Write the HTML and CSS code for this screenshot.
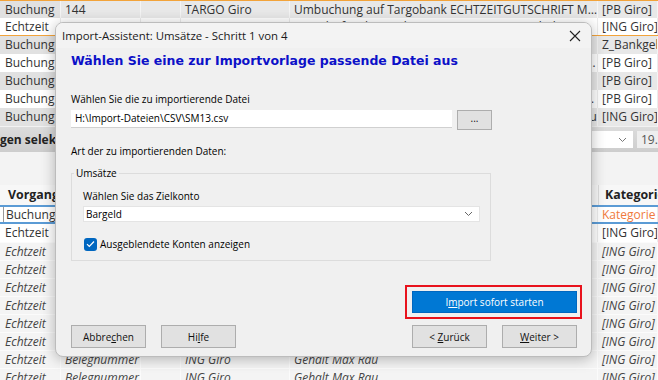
FILE: index.html
```html
<!DOCTYPE html>
<html lang="de">
<head>
    <meta charset="UTF-8">
    <meta name="viewport" content="width=device-width, initial-scale=1.0">
    <title>Import-Assistent</title>
<link rel="stylesheet" href="styles.css">
</head>
<body>
    <div class="app">
        <div class="rows top">
            <div class="row alt"><div class="c c1">Buchung</div><div class="c c2">144</div><div class="c c3"></div><div class="c c4">TARGO Giro</div><div class="c c5">Umbuchung auf Targobank ECHTZEITGUTSCHRIFT Max Rau</div><div class="c c6">[PB Giro]</div></div>
            <div class="row new"><div class="c c1">Echtzeit</div><div class="c c2"></div><div class="c c3"></div><div class="c c4"></div><div class="c c5">Gutschrift Echtzeitüberweisung Max Rau Gehalt Januar</div><div class="c c6">[ING Giro]</div></div>
            <div class="row alt"><div class="c c1">Buchung</div><div class="c c2"></div><div class="c c3"></div><div class="c c4"></div><div class="c c5">Kontoführung</div><div class="c c6">Z_Bankgebühren</div></div>
            <div class="row"><div class="c c1">Buchung</div><div class="c c2"></div><div class="c c3"></div><div class="c c4"></div><div class="c c5">Lastschrift Stadtwerke Abschlag Strom und Gas Februar</div><div class="c c6">[PB Giro]</div></div>
            <div class="row alt"><div class="c c1">Buchung</div><div class="c c2"></div><div class="c c3"></div><div class="c c4"></div><div class="c c5">Dauerauftrag Miete Wohnung Hauptstraße 12 Max Rau Februar</div><div class="c c6">[PB Giro]</div></div>
            <div class="row"><div class="c c1">Buchung</div><div class="c c2"></div><div class="c c3"></div><div class="c c4"></div><div class="c c5">Kartenzahlung Supermarkt Filiale 0815 Einkauf Lebensmittel</div><div class="c c6">[PB Giro]</div></div>
            <div class="row alt"><div class="c c1">Buchung</div><div class="c c2"></div><div class="c c3"></div><div class="c c4"></div><div class="c c5">Umbuchung auf ING Giro Tagesgeld Sparrate Max Rau</div><div class="c c6">[ING Giro]</div></div>
        </div>
        <div class="filter">
            <div class="filter-label">gen selektieren</div>
            <div class="combo"><svg width="9" height="6" viewBox="0 0 9 6"><path d="M1 1l3.5 3.5L8 1" fill="none" stroke="#777" stroke-width="1"/></svg></div>
            <div class="date">19.</div>
        </div>
        <div class="space"></div>
        <div class="row head"><div class="c c1">Vorgang</div><div class="c c2"></div><div class="c c3"></div><div class="c c4"></div><div class="c c5"></div><div class="c c6">Kategorie</div></div>
        <div class="rows bottom">
            <div class="row sel"><div class="c c1">Buchung</div><div class="c c2"></div><div class="c c3"></div><div class="c c4"></div><div class="c c5"></div><div class="c c6 orange">Kategorie</div></div>
            <div class="row"><div class="c c1">Echtzeit</div><div class="c c2"></div><div class="c c3"></div><div class="c c4"></div><div class="c c5"></div><div class="c c6">[ING Giro]</div></div>
            <div class="row it"><div class="c c1">Echtzeit</div><div class="c c2"></div><div class="c c3"></div><div class="c c4"></div><div class="c c5"></div><div class="c c6">[ING Giro]</div></div>
            <div class="row it"><div class="c c1">Echtzeit</div><div class="c c2"></div><div class="c c3"></div><div class="c c4"></div><div class="c c5"></div><div class="c c6">[ING Giro]</div></div>
            <div class="row it"><div class="c c1">Echtzeit</div><div class="c c2"></div><div class="c c3"></div><div class="c c4"></div><div class="c c5"></div><div class="c c6">[ING Giro]</div></div>
            <div class="row it"><div class="c c1">Echtzeit</div><div class="c c2"></div><div class="c c3"></div><div class="c c4"></div><div class="c c5"></div><div class="c c6">[ING Giro]</div></div>
            <div class="row it"><div class="c c1">Echtzeit</div><div class="c c2"></div><div class="c c3"></div><div class="c c4"></div><div class="c c5"></div><div class="c c6">[ING Giro]</div></div>
            <div class="row it"><div class="c c1">Echtzeit</div><div class="c c2"></div><div class="c c3"></div><div class="c c4"></div><div class="c c5"></div><div class="c c6">[ING Giro]</div></div>
            <div class="row it"><div class="c c1">Echtzeit</div><div class="c c2">Belegnummer</div><div class="c c3"></div><div class="c c4">ING Giro</div><div class="c c5">Gehalt Max Rau</div><div class="c c6">[ING Giro]</div></div>
            <div class="row it"><div class="c c1">Echtzeit</div><div class="c c2">Belegnummer</div><div class="c c3"></div><div class="c c4">ING Giro</div><div class="c c5">Gehalt Max Rau</div><div class="c c6">[ING Giro]</div></div>
        </div>
    </div>

    <div class="dialog">
        <div class="titlebar">
            <span>Import-Assistent: Umsätze - Schritt 1 von 4</span>
            <svg class="close" width="12" height="12" viewBox="0 0 12 12"><path d="M1 1l10 10M11 1L1 11" stroke="#222" stroke-width="1.1"/></svg>
        </div>
        <div class="dlg-body">
            <div class="heading">Wählen Sie eine zur Importvorlage passende Datei aus</div>
            <div class="label first">Wählen Sie die zu importierende Datei</div>
            <div class="file-row">
                <div class="input">H:\Import-Dateien\CSV\SM13.csv</div>
                <div class="btn dots">...</div>
            </div>
            <div class="label second">Art der zu importierenden Daten:</div>
            <fieldset class="group">
                <legend>Umsätze</legend>
                <div class="label">Wählen Sie das Zielkonto</div>
                <div class="select">
                    <span>Bargeld</span>
                    <svg width="9" height="6" viewBox="0 0 9 6"><path d="M1 1l3.5 3.5L8 1" fill="none" stroke="#666" stroke-width="1"/></svg>
                </div>
                <div class="check">
                    <span class="box"><svg width="9" height="8" viewBox="0 0 9 8"><path d="M1 4.2l2.3 2.3L8 1.5" fill="none" stroke="#fff" stroke-width="1.2"/></svg></span>
                    <span>Ausgeblendete Konten anzeigen</span>
                </div>
            </fieldset>
            <div class="actions">
                <div class="highlight"><div class="btn primary"><span>I<u>m</u>port sofort starten</span></div></div>
            </div>
            <div class="footer">
                <div class="btn"><span>Abbre<u>c</u>hen</span></div>
                <div class="btn"><span>Hi<u>l</u>fe</span></div>
                <div class="grow"></div>
                <div class="btn"><span>&lt; <u>Z</u>urück</span></div>
                <div class="btn"><span><u>W</u>eiter &gt;</span></div>
            </div>
        </div>
    </div>
</body>
</html>
```

FILE: styles.css
```css
* {
    margin: 0;
    padding: 0;
    box-sizing: border-box;
}
body {
    width: 658px;
    height: 380px;
    overflow: hidden;
    background: #f2f2f2;
    font-family: "Open Sans", sans-serif;
    font-size: 12px;
    color: #333;
}
.app {
    border-top: 1px solid #f2a33a;
}
.row {
    display: grid;
    grid-template-columns: 61px 80px 40px 109px 308px 1fr;
    height: 18px;
    line-height: 17px;
    background: #fff;
}
.c {
    padding-left: 4px;
    white-space: nowrap;
    overflow: hidden;
    text-overflow: ellipsis;
    border-right: 1px solid #ececec;
}
.c1 {
    padding-left: 5px;
}
.c6 {
    text-overflow: clip;
}
.row.alt {
    background: #e8e8e8;
}
.row.alt .c {
    border-right-color: #f4f4f4;
}
.row.alt .c1 {
    background: #e1e1e1;
}
.row.new {
    height: 18px;
    border-bottom: 1px solid #f2a33a;
}
.top .row:first-child {
    height: 17px;
}
.filter {
    height: 25px;
    margin-top: 1px;
    display: flex;
    align-items: center;
    background: linear-gradient(#dcdcdc, #cdcdcd);
}
.filter-label {
    font-weight: bold;
    color: #222;
    width: 592px;
    white-space: nowrap;
    overflow: hidden;
}
.combo {
    width: 41px;
    height: 17px;
    background: #fff;
    display: flex;
    align-items: center;
    justify-content: flex-end;
    padding-right: 6px;
}
.date {
    margin-left: 4px;
    height: 17px;
    flex: 1;
    background: #eeeeee;
    padding-left: 4px;
    line-height: 17px;
    color: #555;
}
.space {
    height: 33px;
    background: #f3f3f3;
}
.row.head {
    height: 20px;
    line-height: 20px;
    background: #f7f7f7;
    font-weight: bold;
    font-size: 12.4px;
    color: #222;
}
.row.head .c {
    border-right: none;
    overflow: visible;
    text-overflow: clip;
}
.row.head .c1 {
    padding-left: 8px;
}
.row.head .c6 {
    border-left: 1px solid #dcdcdc;
    padding-left: 6px;
}
.row.sel {
    height: 19px;
    border-top: 2px solid #5b9bd5;
    border-bottom: 2px solid #5b9bd5;
    line-height: 15px;
}
.row.sel .c1 {
    border-left: 1px solid #999;
    margin-left: 3px;
    padding-left: 2px;
}
.orange {
    color: #f07a3c;
}
.row.it {
    font-style: italic;
    color: #444;
    background: #f4f4f4;
    border-top: 1px solid #fbfbfb;
}
.row.it .c {
    border-right-color: #fbfbfb;
}

.dialog {
    position: absolute;
    left: 55px;
    top: 22px;
    width: 537px;
    height: 335px;
    background: #f0f0f0;
    border: 1px solid #bcbcbc;
    border-radius: 8px;
    box-shadow: 0 2px 14px rgba(0, 0, 0, 0.28);
    display: flex;
    flex-direction: column;
    overflow: hidden;
    color: #000;
    font-size: 10px;
}
.titlebar {
    height: 27px;
    background: #f3f3f3;
    display: flex;
    align-items: center;
    padding-left: 6px;
    padding-right: 10px;
    justify-content: space-between;
    font-size: 11.4px;
    color: #1a1a1a;
}
.dlg-body {
    flex: 1;
    display: flex;
    flex-direction: column;
    padding: 4px 14px 8px 15px;
}
.heading {
    font-family: "DejaVu Sans", sans-serif;
    font-weight: bold;
    font-size: 12.5px;
    line-height: 18px;
    color: #0c10c8;
}
.label {
    line-height: 16px;
}
.label.first {
    margin-top: 21px;
}
.label.second {
    margin-top: 13px;
}
.file-row {
    display: flex;
    align-items: flex-start;
    margin-top: 3px;
}
.input {
    width: 381px;
    height: 18px;
    background: #fff;
    border-bottom: 1px solid #d0d0d0;
    line-height: 17px;
    padding-left: 4px;
}
.btn {
    width: 75px;
    height: 23px;
    background: #e1e1e1;
    border: 1px solid #adadad;
    display: flex;
    align-items: center;
    justify-content: center;
    color: #111;
    white-space: pre;
}
.btn.dots {
    width: 35px;
    height: 20px;
    margin-left: 5px;
    align-items: flex-start;
    line-height: 14px;
}
.group {
    margin-top: 6px;
    width: 420px;
    height: 96px;
    border: 1px solid #dcdcdc;
    padding: 7px 10px 0 11px;
}
.group legend {
    padding: 0 2px;
    margin-left: -9px;
    line-height: 16px;
}
.select {
    margin-top: 2px;
    height: 16px;
    background: #fff;
    border: 1px solid #e4e4e4;
    display: flex;
    align-items: center;
    justify-content: space-between;
    padding: 0 6px 0 2px;
}
.check {
    margin-top: 15px;
    display: flex;
    align-items: center;
    line-height: 14px;
}
.box {
    width: 13px;
    height: 13px;
    margin-left: 1px;
    margin-right: 3px;
    border-radius: 3px;
    background: #0067c0;
    display: flex;
    align-items: center;
    justify-content: center;
}
.actions {
    margin-top: 24px;
    margin-right: -5px;
    display: flex;
    justify-content: flex-end;
}
.highlight {
    width: 177px;
    height: 34px;
    border: 2px solid #e8121c;
    padding: 4px 3px 4px 5px;
}
.btn.primary {
    width: 165px;
    height: 22px;
    background: #0078d4;
    border: 1px solid #0067c0;
    color: #fff;
}
.footer {
    margin-top: 6px;
    display: flex;
    gap: 15px;
}
.grow {
    flex: 1;
}
```
